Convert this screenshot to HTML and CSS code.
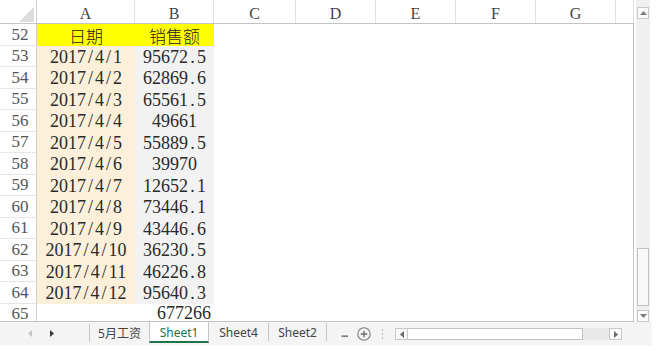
FILE: index.html
```html
<!DOCTYPE html>
<html lang="zh-CN">
<head>
    <meta charset="UTF-8">
    <title>销售额</title>
    <link rel="stylesheet" href="styles.css">
</head>
<body>
    <div class="window">
        <div class="top">
            <div class="sheet">
                <div class="grid colhead" id="colhead">
                    <div class="corner"><span class="tri"></span></div>
                </div>
                <div class="grid rows" id="rows"></div>
            </div>
            <div class="vscroll">
                <div class="sbtn"><svg width="7" height="4" viewBox="0 0 7 4"><path d="M0 4 L3.5 0 L7 4 Z" fill="#7a7a7a"/></svg></div>
                <div class="vtrack"><div class="vthumb"></div></div>
                <div class="sbtn"><svg width="7" height="4" viewBox="0 0 7 4"><path d="M0 0 L3.5 4 L7 0 Z" fill="#7a7a7a"/></svg></div>
            </div>
        </div>

        <div class="tabbar">
            <div class="nav">
                <svg width="4" height="7" viewBox="0 0 4 7"><path d="M4 0 L0 3.5 L4 7 Z" fill="#c4c4c4"/></svg>
                <svg width="4" height="7" viewBox="0 0 4 7"><path d="M0 0 L4 3.5 L0 7 Z" fill="#3a3a3a"/></svg>
            </div>
            <div class="tab">5月工资</div>
            <div class="tab active">Sheet1</div>
            <div class="tab">Sheet4</div>
            <div class="tab sep">Sheet2</div>
            <div class="more">...</div>
            <div class="add">
                <svg width="14" height="14" viewBox="0 0 14 14"><circle cx="7" cy="7" r="6.2" fill="none" stroke="#7a7a7a" stroke-width="1.1"/><path d="M7 3.8 V10.2 M3.8 7 H10.2" stroke="#6a6a6a" stroke-width="1.3"/></svg>
            </div>
            <div class="grip"><i></i><i></i><i></i></div>
            <div class="hscroll">
                <div class="hbtn"><svg width="4" height="7" viewBox="0 0 4 7"><path d="M4 0 L0 3.5 L4 7 Z" fill="#6a6a6a"/></svg></div>
                <div class="hthumb"></div>
                <div class="htrack"></div>
                <div class="hbtn"><svg width="4" height="7" viewBox="0 0 4 7"><path d="M0 0 L4 3.5 L0 7 Z" fill="#6a6a6a"/></svg></div>
            </div>
        </div>
    </div>

    <script>
        const cols = ['A', 'B', 'C', 'D', 'E', 'F', 'G', ''];
        const data = [
            [52, '日期', '销售额'],
            [53, '2017/4/1', '95672.5'],
            [54, '2017/4/2', '62869.6'],
            [55, '2017/4/3', '65561.5'],
            [56, '2017/4/4', '49661'],
            [57, '2017/4/5', '55889.5'],
            [58, '2017/4/6', '39970'],
            [59, '2017/4/7', '12652.1'],
            [60, '2017/4/8', '73446.1'],
            [61, '2017/4/9', '43446.6'],
            [62, '2017/4/10', '36230.5'],
            [63, '2017/4/11', '46226.8'],
            [64, '2017/4/12', '95640.3'],
            [65, '', '677266']
        ];

        // half-width glyphs get a full digit slot, like the sheet's font
        function mono(text) {
            return text.replace(/[\/.]/g, '<span class="w">$&</span>');
        }

        function cell(cls, html) {
            const div = document.createElement('div');
            div.className = cls;
            div.innerHTML = html || '';
            return div;
        }

        const head = document.getElementById('colhead');
        cols.forEach(c => head.appendChild(cell('ch', c)));

        const rows = document.getElementById('rows');
        data.forEach(([n, a, b]) => {
            const last = n === 65 ? ' last' : '';
            rows.appendChild(cell('rh' + last, n));
            if (n === 52) {
                rows.appendChild(cell('c title', a));
                rows.appendChild(cell('c title', b));
            } else if (n === 65) {
                rows.appendChild(cell('c', ''));
                rows.appendChild(cell('c num total last', mono(b)));
            } else {
                rows.appendChild(cell('c num date', mono(a)));
                rows.appendChild(cell('c num amount', mono(b)));
            }
            for (let i = 2; i < cols.length; i++) {
                rows.appendChild(cell(i === cols.length - 1 ? 'c edge' : 'c', ''));
            }
        });
    </script>
</body>
</html>
```

FILE: styles.css
```css
body {
    margin: 0;
    background-color: #fff;
    font-family: "Liberation Serif", "Noto Sans CJK SC", serif;
    color: #222;
}

.window {
    width: 652px;
    height: 351px;
    display: flex;
    flex-direction: column;
    overflow: hidden;
}

.top {
    display: flex;
    height: 322px;
}

.sheet {
    width: 634px;
    display: flex;
    flex-direction: column;
}

.grid {
    display: grid;
    grid-template-columns: 37px 98px 79px 82px 80px 80px 80px 80px 18px;
}

/* Column header */
.colhead {
    height: 24px;
    border-bottom: 1px solid #c4c4c4;
    box-sizing: border-box;
}

.corner {
    position: relative;
    border-right: 1px solid #cfcfcf;
}

.corner .tri {
    position: absolute;
    right: 2px;
    bottom: 1px;
    width: 0;
    height: 0;
    border-left: 15px solid transparent;
    border-bottom: 15px solid #dcdcdc;
}

.ch {
    display: flex;
    justify-content: center;
    align-items: center;
    padding-top: 4px;
    font-size: 16px;
    line-height: 1;
    color: #444;
    border-right: 1px solid #e0e0e0;
}

/* Rows: the last row is only partly in view */
.rows {
    height: 298px;
    grid-template-rows: repeat(13, 21.5px) 1fr;
    overflow: hidden;
    box-sizing: border-box;
    border-bottom: 1px solid #c4c4c4;
}

.rh {
    display: flex;
    justify-content: center;
    align-items: center;
    padding-left: 4px;
    font-size: 17px;
    line-height: 1;
    color: #555;
    border-right: 1px solid #cfcfcf;
    border-bottom: 1px solid #e6e6e6;
}

.rh.last {
    border-bottom: none;
    align-items: flex-end;
}

.c {
    display: flex;
    align-items: center;
    justify-content: center;
    white-space: nowrap;
    line-height: 1;
}

.c.edge {
    border-right: 1px solid #c4c4c4;
}

.title {
    background-color: #ffff00;
    font-family: "Noto Sans CJK SC", sans-serif;
    font-size: 17px;
    font-weight: 300;
    color: #222;
    padding-top: 1px;
}

.num {
    font-size: 18px;
    color: #2a2a2a;
    padding-top: 1px;
}

.num.last {
    align-items: flex-end;
    padding-top: 0;
}

.date {
    background-color: #fcf0da;
}

.amount {
    background-color: #f2f2f2;
}

.total {
    justify-content: flex-end;
    padding-right: 3px;
}

.w {
    display: inline-block;
    width: 9px;
    text-align: center;
}

/* Vertical scrollbar */
.vscroll {
    width: 14px;
    margin-left: 2px;
    background-color: #f0f0f0;
    display: flex;
    flex-direction: column;
    align-items: center;
    padding: 7px 0 0;
    box-sizing: border-box;
}

.sbtn {
    width: 12px;
    height: 12px;
    box-sizing: border-box;
    border: 1px solid #c8c8c8;
    background-color: #fafafa;
    display: flex;
    justify-content: center;
    align-items: center;
}

.vtrack {
    flex: 1;
    width: 12px;
    display: flex;
    flex-direction: column;
    justify-content: flex-end;
    padding-bottom: 4px;
}

.vthumb {
    height: 58px;
    box-sizing: border-box;
    border: 1px solid #c2c2c2;
    background-color: #f9f9f9;
}

/* Sheet tabs */
.tabbar {
    height: 23px;
    display: flex;
    align-items: flex-start;
    background-color: #f4f4f4;
    font-family: "Noto Sans", "Noto Sans CJK SC", sans-serif;
    font-size: 12px;
    color: #444;
}

.nav {
    width: 90px;
    height: 18px;
    display: flex;
    align-items: center;
    gap: 18px;
    padding-left: 28px;
    box-sizing: border-box;
    border-right: 1px solid #c6c6c6;
    margin-top: 2px;
}

.tab {
    width: 59px;
    height: 21px;
    display: flex;
    justify-content: center;
    align-items: center;
    box-sizing: border-box;
}

.tab.active {
    background-color: #fff;
    color: #217346;
    border-left: 1px solid #c6c6c6;
    border-right: 1px solid #c6c6c6;
    border-bottom: 2px solid #217346;
    padding-top: 2px;
    width: 60px;
}

.tab.sep {
    border-left: 1px solid #c6c6c6;
    border-right: 1px solid #c6c6c6;
    height: 18px;
    margin-top: 1px;
}

.more {
    height: 21px;
    display: flex;
    align-items: center;
    margin-left: 14px;
    font-size: 11px;
    font-weight: bold;
    color: #555;
    letter-spacing: -1px;
}

.add {
    height: 23px;
    display: flex;
    align-items: center;
    margin-left: 10px;
}

.grip {
    height: 23px;
    display: flex;
    flex-direction: column;
    justify-content: center;
    gap: 2px;
    margin-left: 11px;
}

.grip i {
    width: 1px;
    height: 2px;
    background-color: #bdbdbd;
}

.hscroll {
    display: flex;
    height: 12px;
    margin-top: 6px;
    margin-left: 12px;
}

.hbtn {
    width: 13px;
    height: 12px;
    box-sizing: border-box;
    border: 1px solid #c8c8c8;
    background-color: #fafafa;
    display: flex;
    justify-content: center;
    align-items: center;
}

.hthumb {
    width: 175px;
    box-sizing: border-box;
    border: 1px solid #c2c2c2;
    border-left: none;
    background-color: #fff;
}

.htrack {
    width: 26px;
    background-color: #e8e8e8;
}
```
